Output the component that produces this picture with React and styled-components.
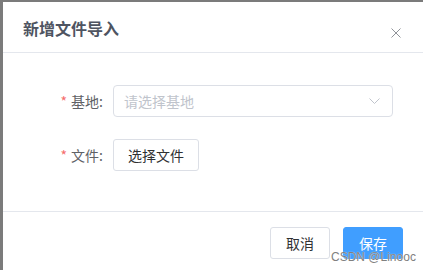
import styled, { createGlobalStyle } from 'styled-components';

const GlobalStyle = createGlobalStyle`
  html, body {
    margin: 0;
    padding: 0;
    background: #7b7b7b;
  }
  body {
    font-family: 'Noto Sans CJK SC', 'Liberation Sans', sans-serif;
  }
`;

const Overlay = styled.div`
  width: 423px;
  height: 270px;
  overflow: hidden;
  padding: 2px 0 0 3px;
  box-sizing: border-box;
  background: #7b7b7b;
  position: relative;
`;

const Dialog = styled.div`
  width: 420px;
  height: 300px;
  background: #fff;
  display: flex;
  flex-direction: column;
`;

const Header = styled.div`
  height: 50px;
  border-bottom: 1px solid #e4e7ed;
  display: flex;
  justify-content: space-between;
  align-items: flex-start;
  padding: 0 20px;
`;

const Title = styled.span`
  margin-top: 14px;
  font-size: 16px;
  line-height: 24px;
  font-weight: 700;
  color: #4e5461;
`;

const Close = styled.button`
  margin-top: 26px;
  margin-right: 2px;
  width: 10px;
  height: 10px;
  padding: 0;
  border: 0;
  background: none;
  display: flex;
  cursor: pointer;
`;

const Body = styled.div`
  padding: 32px 0 18px;
  border-bottom: 1px solid #e4e7ed;
`;

const FormRow = styled.div`
  display: flex;
  align-items: center;
  height: 32px;
  margin-bottom: 22px;
`;

const Label = styled.label`
  width: 110px;
  box-sizing: border-box;
  padding-right: 10px;
  text-align: right;
  font-size: 14px;
  color: #606266;

  &::before {
    content: '*';
    color: #f56c6c;
    margin-right: 4px;
  }
`;

const Select = styled.div`
  width: 280px;
  height: 32px;
  box-sizing: border-box;
  border: 1px solid #dcdfe6;
  border-radius: 4px;
  display: flex;
  align-items: center;
  justify-content: space-between;
  padding: 0 12px 0 10px;
  font-size: 14px;
  color: #c0c4cc;
`;

const Button = styled.button`
  height: 32px;
  box-sizing: border-box;
  padding: 0 ${p => (p.$wide ? 14 : 15)}px;
  border: 1px solid ${p => (p.$primary ? '#409eff' : '#dcdfe6')};
  border-radius: 3px;
  background: ${p => (p.$primary ? '#409eff' : '#fff')};
  color: ${p => (p.$primary ? '#fff' : '#303133')};
  font-family: inherit;
  font-size: 14px;
  line-height: 1;
  cursor: pointer;
`;

const Footer = styled.div`
  display: flex;
  justify-content: flex-end;
  gap: 13px;
  padding: 15px 20px;
`;

const Watermark = styled.span`
  position: absolute;
  left: 331px;
  top: 251px;
  font-family: 'Liberation Sans', sans-serif;
  font-size: 12px;
  line-height: 12px;
  color: #808080;
  text-shadow: 0 0 1px #fff;
  pointer-events: none;
`;

export default function App() {
  return (
    <>
      <GlobalStyle />
      <Overlay>
        <Dialog>
          <Header>
            <Title>新增文件导入</Title>
            <Close aria-label="关闭">
              <svg width="10" height="10" viewBox="0 0 10 10">
                <path d="M0.5 0.5L9.5 9.5M9.5 0.5L0.5 9.5" stroke="#909399" strokeWidth="1" />
              </svg>
            </Close>
          </Header>
          <Body>
            <FormRow>
              <Label>基地:</Label>
              <Select>
                <span>请选择基地</span>
                <svg width="11" height="6" viewBox="0 0 11 6">
                  <path d="M0.5 0.5L5.5 5.5L10.5 0.5" fill="none" stroke="#c0c4cc" strokeWidth="1" />
                </svg>
              </Select>
            </FormRow>
            <FormRow>
              <Label>文件:</Label>
              <Button $wide>选择文件</Button>
            </FormRow>
          </Body>
          <Footer>
            <Button>取消</Button>
            <Button $primary>保存</Button>
          </Footer>
        </Dialog>
        <Watermark>CSDN @Linooc</Watermark>
      </Overlay>
    </>
  );
}
